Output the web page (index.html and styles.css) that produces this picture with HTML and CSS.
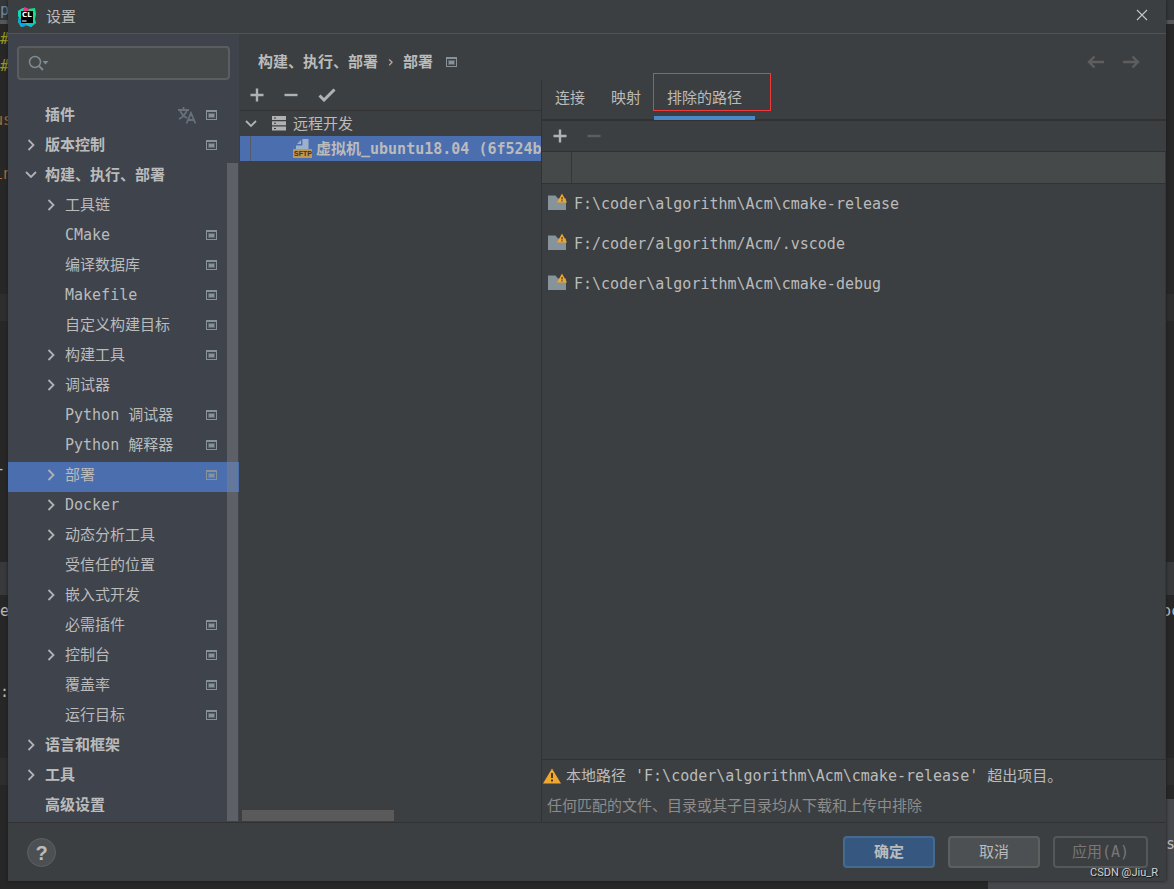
FILE: index.html
```html
<!DOCTYPE html>
<html lang="zh-CN">
<head>
<meta charset="utf-8">
<title>设置</title>
<link rel="stylesheet" href="styles.css">
<script src="app.js" defer></script>
</head>
<body>
<svg class="defs" aria-hidden="true">
  <symbol id="right" viewBox="0 0 12 12"><path d="M3.500 1 8.500 6l-5 5" fill="none" stroke="#b0b2b4" stroke-width="1.800"/></symbol>
  <symbol id="down" viewBox="0 0 12 12"><path d="M1 3 6 8l5-5" fill="none" stroke="#b0b2b4" stroke-width="1.800"/></symbol>
  <symbol id="project" viewBox="0 0 11 10"><path fill="#87939a" fill-rule="evenodd" d="M0 0h11v10H0zM1 2v7h9V2z"/><path fill="#87939a" opacity=".45" d="M2 3h7v5H2z"/><path fill="#87939a" d="M3 4h5v3H3z"/></symbol>
  <symbol id="plus" viewBox="0 0 14 14"><path d="M7 .5v13M.5 7h13" stroke="currentColor" stroke-width="2.400"/></symbol>
  <symbol id="minus" viewBox="0 0 14 14"><path d="M.5 7h13" stroke="currentColor" stroke-width="2.400"/></symbol>
  <symbol id="folder" viewBox="0 0 20 18"><path d="M0 2.500h7.500l2.500 3h8v11.500H0z" fill="#87939a"/><path d="M14 .5 9 9.500h10z" fill="#f0a732"/><path d="M13.300 4h1.500v2.600h-1.500zM13.300 7.300h1.500v1.200h-1.500z" fill="#6b4e1e"/></symbol>
  <symbol id="back" viewBox="0 0 18 14"><path d="M17 7H2M7.500 1.500 2 7l5.500 5.500" fill="none" stroke="#5e5e5e" stroke-width="2.400"/></symbol>
</svg>

<div class="editor" aria-hidden="true">
  <i class="band band-top"></i><i class="band band-a"></i><i class="band band-b"></i><i class="band band-c"></i><i class="band band-status"></i>
  <span class="code code-p">p</span>
  <span class="code code-h1">#i</span>
  <span class="code code-h2">#i</span>
  <span class="code code-us">us</span>
  <span class="code code-in">in</span>
  <span class="code code-dash">-</span>
  <span class="code code-e">e</span>
  <span class="code code-colon">:</span>
  <span class="code code-oc">oc</span>
  <span class="code code-s">s</span>
</div>

<main class="dialog">
  <header class="titlebar">
    <svg class="logo" viewBox="0 0 20 20" aria-hidden="true">
      <path d="M1 4 6 1l5 1 7-1 1 6-1 5 1 4-5 4-5-2-5 2-3-5 1-4-1-4z" fill="#21d789"/>
      <path d="M1 4 6 1l3 2-6 6-2 1z" fill="#14d6b0"/><path d="M7 0l5 2-1 3-5-1z" fill="#ed358c"/>
      <path d="M1 11l4 1 5 6-4 2-4-3z" fill="#08a4e8"/><path d="M13 15l6 1-5 4-4-2z" fill="#07c3d2"/>
      <path d="M4 4h12v12H4z" fill="#000"/>
      <text x="5" y="10" class="logo-text">CL</text><path d="M5 13.500h4.500v1H5z" fill="#fff"/>
    </svg>
    <h1>设置</h1>
    <button class="plain close" aria-label="关闭"><svg viewBox="0 0 12 12"><path d="m1 1 10 10M11 1 1 11" stroke="#c4c6c7" stroke-width="1.100"/></svg></button>
  </header>

  <div class="content">
    <nav class="sidebar" aria-label="设置分类">
      <label class="search">
        <svg viewBox="0 0 22 16" aria-hidden="true"><circle cx="7" cy="7" r="5.500" fill="none" stroke="#7f8b91" stroke-width="1.500"/><path d="m11 11 4 4" stroke="#7f8b91" stroke-width="1.800"/><path d="M14.500 6h6L17.500 9.500z" fill="#7f8b91"/></svg>
        <input type="text" aria-label="搜索设置">
      </label>
      <ul class="tree" id="tree"></ul>
      <i class="thumb"></i>
    </nav>

    <section class="page">
      <div class="crumbs">
        <b>构建、执行、部署</b><span class="sep">›</span><b>部署</b>
        <svg class="project" aria-hidden="true"><use href="#project"/></svg>
        <div class="history">
          <button class="plain" aria-label="后退" disabled><svg><use href="#back"/></svg></button>
          <button class="plain forward" aria-label="前进" disabled><svg><use href="#back"/></svg></button>
        </div>
      </div>
      <div class="panes">
        <section class="servers">
          <div class="toolbar">
            <button class="plain" aria-label="添加"><svg><use href="#plus"/></svg></button>
            <button class="plain" aria-label="移除"><svg><use href="#minus"/></svg></button>
            <button class="plain check" aria-label="设为默认"><svg viewBox="0 0 18 14"><path d="m1.500 7.500 4.500 4.500L16.500 1.500" fill="none" stroke="currentColor" stroke-width="3"/></svg></button>
          </div>
          <ul class="server-tree">
            <li class="server-group">
              <svg class="arrow"><use href="#down"/></svg>
              <svg class="server" viewBox="0 0 14 15"><path fill="#afb1b3" d="M0 0h14v4H0zM0 5.300h14v4H0zM0 10.600h14v4H0z"/><path fill="#3c3f41" d="M2 1.500h2v1H2zM2 6.800h2v1H2zM2 12.100h2v1H2z"/></svg>
              远程开发
            </li>
            <li class="server-item">
              <svg class="sftp" viewBox="0 0 19 19"><path d="M9 0h6.500v10H3V6z" fill="#9db0cc"/><path d="M8.700 0v5.700H3" fill="none" stroke="#4b6eaf" stroke-width="1.400"/><path d="M0 10h19v9H0z" fill="#bf9552"/><text x="1" y="17" class="sftp-text">SFTP</text></svg>
              <span>虚拟机_ubuntu18.04 (6f524b</span>
            </li>
          </ul>
          <i class="hscroll"></i>
        </section>

        <section class="detail">
          <div class="tabs" role="tablist">
            <button role="tab">连接</button>
            <button role="tab">映射</button>
            <button role="tab" class="active" aria-selected="true">排除的路径<i class="mark"></i></button>
          </div>
          <div class="toolbar path-tools">
            <button class="plain" aria-label="添加路径"><svg><use href="#plus"/></svg></button>
            <button class="plain" aria-label="移除路径" disabled><svg><use href="#minus"/></svg></button>
          </div>
          <div class="paths">
            <table>
              <thead><tr><th class="kind"></th><th></th></tr></thead>
              <tbody>
                <tr><td colspan="2"><svg class="folder"><use href="#folder"/></svg>F:\coder\algorithm\Acm\cmake-release</td></tr>
                <tr><td colspan="2"><svg class="folder"><use href="#folder"/></svg>F:/coder/algorithm/Acm/.vscode</td></tr>
                <tr><td colspan="2"><svg class="folder"><use href="#folder"/></svg>F:\coder\algorithm\Acm\cmake-debug</td></tr>
              </tbody>
            </table>
          </div>
          <div class="notes">
            <p class="warning"><svg viewBox="0 0 18 16" aria-hidden="true"><path d="M9 .5 0 15.500h18z" fill="#f0a732"/><path d="M8 5h2v5H8zM8 11.500h2v2H8z" fill="#4b3c22"/></svg>本地路径 'F:\coder\algorithm\Acm\cmake-release' 超出项目。</p>
            <p class="hint">任何匹配的文件、目录或其子目录均从下载和上传中排除</p>
          </div>
        </section>
      </div>
    </section>
  </div>

  <footer class="footer">
    <button class="help" aria-label="帮助">?</button>
    <button class="btn primary">确定</button>
    <button class="btn">取消</button>
    <button class="btn apply" disabled>应用(A)</button>
  </footer>
</main>
<div class="credit">CSDN @Jiu_R</div>
</body>
</html>
```

FILE: styles.css
```css
* { box-sizing: border-box; }
body {
  margin: 0;
  height: 100vh;
  overflow: hidden;
  position: relative;
  background: #272727;
  color: #bbbbbb;
  font: 15px/20px "DejaVu Sans Mono", "Noto Sans CJK SC", monospace;
}
button, input { font: inherit; color: inherit; }
ul, p, h1 { margin: 0; padding: 0; list-style: none; font-size: 15px; font-weight: 400; }
svg { display: block; flex: none; }
.defs { position: absolute; width: 0; height: 0; }
.plain { border: 0; padding: 0; background: none; display: flex; color: #afb1b3; }
.plain svg { width: 14px; height: 14px; }
.plain:disabled { color: #5c5e60; }

/* Editor window behind the dialog */
.editor { position: absolute; inset: 0; overflow: hidden; }
.band { position: absolute; left: 0; right: 0; background: #2e2e2e; }
.band-top { top: 0; height: 24px; background: #33373a; border-bottom: 4px solid #55575a; }
.band-a { top: 294px; height: 27px; }
.band-b { top: 562px; height: 33px; background: #37393b; }
.band-c { top: 758px; height: 27px; }
.band-status { left: auto; right: 0; bottom: 0; width: 186px; height: 90px; background: #47484b; }
.code { position: absolute; left: 0; }
.code-p { top: 0; color: #6c89a3; }
.code-h1 { top: 29px; color: #9a9622; }
.code-h2 { top: 56px; color: #9a9622; }
.code-us { top: 110px; left: -6px; color: #b06a32; }
.code-in { top: 164px; left: -6px; color: #b06a32; }
.code-dash { top: 459px; left: -4px; }
.code-e { top: 601px; }
.code-colon { top: 682px; }
.code-oc { top: 601px; left: auto; right: -6px; }
.code-s { top: 834px; left: auto; right: -1px; }

.dialog {
  position: relative;
  height: calc(100vh - 8px);
  margin: 0 8px;
  display: flex;
  flex-direction: column;
  background: #3c3f41;
  box-shadow: 0 0 3px #1b1b1b;
}
.titlebar {
  height: 34px;
  flex: none;
  display: flex;
  align-items: center;
  gap: 9px;
  padding: 0 18px 0 9px;
  border-bottom: 1px solid #515456;
}
.logo { width: 20px; height: 20px; }
.logo-text { font: 700 7px "DejaVu Sans", sans-serif; fill: #fff; }
.close { margin: 0 0 4px auto; }
.close svg { width: 12px; height: 12px; }

.content { flex: 1; min-height: 0; display: flex; gap: 1px; }
.sidebar {
  width: 231px;
  flex: none;
  position: relative;
  display: flex;
  flex-direction: column;
  background: #3e434c;
}
.search {
  margin: 12px 9px 22px;
  height: 34px;
  display: flex;
  align-items: center;
  gap: 4px;
  padding: 0 9px;
  border: 2px solid #5b5e60;
  border-radius: 4px;
  background: #45494a;
}
.search svg { width: 22px; height: 16px; }
.search input { flex: 1; min-width: 0; border: 0; outline: 0; background: none; }
.tree { flex: 1; min-height: 0; overflow: hidden; }
.tree li {
  height: 30px;
  display: flex;
  align-items: center;
  padding: 0 22px 4px 17px;
  white-space: nowrap;
}
.tree li.child { padding-left: 37px; }
.tree li.top { font-weight: 700; }
.tree li.selected { background: #4b6eaf; }
.tree .label { flex: 1; margin-left: 8px; }
.arrow { width: 12px; height: 12px; }
.project { width: 11px; height: 10px; }
.lang { width: 18px; height: 17px; margin-right: 10px; }
.thumb { position: absolute; top: 129px; right: 1px; bottom: 1px; width: 11px; background: rgba(130, 132, 136, 0.45); }

.page { flex: 1; min-width: 0; display: flex; flex-direction: column; }
.crumbs { height: 46px; flex: none; display: flex; align-items: center; padding: 10px 26px 0 18px; }
.sep { width: 25px; text-align: center; }
.crumbs .project { margin-left: 13px; }
.history { margin-left: auto; display: flex; gap: 17px; }
.history svg { width: 18px; height: 14px; }
.forward { transform: scaleX(-1); }
.panes { flex: 1; min-height: 0; display: flex; }
.servers { width: 301px; flex: none; position: relative; }
.toolbar { height: 31px; display: flex; align-items: center; gap: 20px; padding: 0 10px; border-bottom: 1px solid #323232; }
.toolbar .check svg { width: 18px; }
.server-tree li { height: 25px; display: flex; align-items: center; white-space: nowrap; overflow: hidden; }
.server-group { padding-left: 5px; }
.server { width: 14px; height: 15px; margin: 0 7px 0 15px; }
.server-item { position: relative; padding-left: 53px; gap: 4px; font-weight: 700; background: #4b6eaf; color: #bbbbbb; }
.server-item::before { content: ""; position: absolute; left: 10px; top: 0; bottom: 0; width: 1px; background: #555a66; }
.sftp { width: 19px; height: 19px; }
.sftp-text { font: 700 7px "Liberation Sans", sans-serif; fill: #3d3120; }
.hscroll { position: absolute; left: 2px; bottom: 1px; width: 152px; height: 11px; background: #5a5a5b; }

.detail { flex: 1; min-width: 0; display: flex; flex-direction: column; border-left: 1px solid #323232; }
.tabs { height: 41px; flex: none; display: flex; border-bottom: 2px solid #323232; }
.tabs button { position: relative; height: 40px; border: 0; padding: 0 13px; background: none; border-bottom: 4px solid transparent; }
.tabs .active { border-bottom-color: #4a88c7; }
.mark { position: absolute; top: -7px; left: -1px; width: 118px; height: 38px; border: 1px solid #f03a3a; }
.path-tools { flex: none; padding-left: 11px; }
.paths { flex: 1; min-height: 0; border-right: 1px solid #343637; }
.paths table { width: 100%; border-collapse: collapse; table-layout: fixed; }
.paths th { height: 31px; padding: 0; background: #45494a; border-bottom: 1px solid #323232; }
.paths .kind { width: 29px; border-right: 1px solid #343637; }
.paths td { height: 40px; padding: 0 0 0 6px; white-space: pre; }
.folder { display: inline-block; width: 20px; height: 18px; margin-right: 6px; vertical-align: -2px; }
.notes { flex: none; height: 63px; border-top: 1px solid #323232; padding: 6px 0 0 1px; }
.warning { display: flex; align-items: center; gap: 5px; white-space: pre; }
.warning svg { width: 18px; height: 16px; }
.hint { margin: 10px 0 0 4px; color: #8c8c8c; }

.footer { height: 59px; flex: none; display: flex; align-items: flex-start; gap: 13px; padding: 13px 18px 0 19px; border-top: 1px solid #323232; }
.help {
  width: 29px;
  height: 29px;
  margin: 2px auto 0 0;
  padding: 0;
  border: 1px solid #5e6162;
  border-radius: 50%;
  background: #4c5052;
  font: 700 20px/24px "Liberation Sans", sans-serif;
}
.btn { min-width: 92px; height: 32px; padding: 0 17px; border: 2px solid #5e6060; border-radius: 4px; background: #4c5052; }
.btn.primary { background: #365880; border-color: #456a90; font-weight: 700; }
.btn.apply { background: none; color: #777777; border-color: #555858; }
.credit {
  position: absolute;
  right: 16px;
  bottom: 9px;
  font: 11px/14px Roboto, "Liberation Sans", sans-serif;
  color: #d0d0d0;
  text-shadow: 1px 1px 1px #111;
}
```

FILE: app.js
```js
// [label, level, arrow, has project icon]
const items = [
  ["插件", 0, "", true],
  ["版本控制", 0, "right", true],
  ["构建、执行、部署", 0, "down", false],
  ["工具链", 1, "right", false],
  ["CMake", 1, "", true],
  ["编译数据库", 1, "", true],
  ["Makefile", 1, "", true],
  ["自定义构建目标", 1, "", true],
  ["构建工具", 1, "right", true],
  ["调试器", 1, "right", false],
  ["Python 调试器", 1, "", true],
  ["Python 解释器", 1, "", true],
  ["部署", 1, "right", true],
  ["Docker", 1, "right", false],
  ["动态分析工具", 1, "right", false],
  ["受信任的位置", 1, "", false],
  ["嵌入式开发", 1, "right", false],
  ["必需插件", 1, "", true],
  ["控制台", 1, "right", true],
  ["覆盖率", 1, "", true],
  ["运行目标", 1, "", true],
  ["语言和框架", 0, "right", false],
  ["工具", 0, "right", false],
  ["高级设置", 0, "", false]
];
const lang = '<svg class="lang" viewBox="0 0 18 17"><path d="M0 3h11M5.500 0v3M2 3q2 6 7 8M9 3q-2 6-8 9M8.500 16.500 13 6l4.500 10.500M10 13h6" fill="none" stroke="#68717b" stroke-width="1.800"/></svg>';
document.getElementById("tree").innerHTML = items.map(([label, level, arrow, project], i) =>
  `<li class="${level ? "child" : "top"}${label === "部署" ? " selected" : ""}">` +
  `<svg class="arrow">${arrow ? `<use href="#${arrow}"/>` : ""}</svg>` +
  `<span class="label">${label}</span>` +
  (i === 0 ? lang : "") +
  (project ? '<svg class="project"><use href="#project"/></svg>' : "") +
  "</li>").join("");
```
